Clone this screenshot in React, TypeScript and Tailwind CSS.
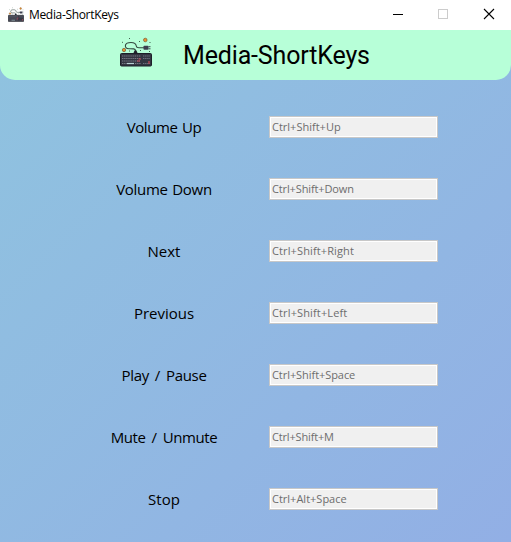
const rows = [
  { label: 'Volume Up', keys: 'Ctrl+Shift+Up', labelSpacing: 'tracking-[-0.4px] [word-spacing:1px]', keySpacing: 'tracking-[0px]' },
  { label: 'Volume Down', keys: 'Ctrl+Shift+Down', labelSpacing: 'tracking-[-0.3px] [word-spacing:1px]', keySpacing: 'tracking-[-0.13px]' },
  { label: 'Next', keys: 'Ctrl+Shift+Right', labelSpacing: 'tracking-[0px]', keySpacing: 'tracking-[0.12px]' },
  { label: 'Previous', keys: 'Ctrl+Shift+Left', labelSpacing: 'tracking-[0px]', keySpacing: 'tracking-[0.13px]' },
  { label: 'Play / Pause', keys: 'Ctrl+Shift+Space', labelSpacing: 'tracking-[-0.3px] [word-spacing:2.3px]', keySpacing: 'tracking-[-0.06px]' },
  { label: 'Mute / Unmute', keys: 'Ctrl+Shift+M', labelSpacing: 'tracking-[-0.4px] [word-spacing:2.5px]', keySpacing: 'tracking-[-0.16px]' },
  { label: 'Stop', keys: 'Ctrl+Alt+Space', labelSpacing: 'tracking-[0px]', keySpacing: 'tracking-[0px]' },
];

function KeyboardIcon({ className }: { className: string }) {
  return (
    <svg viewBox="0 0 32 32" className={className} fill="none">
      <path d="M15.5 16V13.5C15.500 11.500 12 11.700 9 11.700C6 11.700 5 10 5.500 8C6 6 8 5.500 11 5.500C15 5.500 16 7 16.300 9C16.500 10.500 17.500 10.700 19 10.700H24" stroke="#33483f" strokeWidth="1.100" />
      <path d="M13.500 16L14.500 13.500H16.500L17.500 16Z" fill="#20242c" />
      <rect x="23.500" y="8.800" width="5" height="4" rx=".8" fill="#3d3f50" />
      <path d="M28.500 9.700H30.500M28.500 11.800H30.500" stroke="#3d4850" />
      <circle cx="25.300" cy="3" r="1.800" fill="#e9912f" stroke="#6a4a2a" strokeWidth=".6" />
      <circle cx="4" cy="13" r="1.700" fill="#e9912f" stroke="#6a4a2a" strokeWidth=".6" />
      <path d="M9 1.500h1M2 5.300h1M19 4.500h1M29.500 5.500h1M29 14.500h1M9 14h1M20 13.500h1" stroke="#40634f" />
      <rect x=".5" y="16.500" width="31" height="12.500" rx="1" fill="#343642" stroke="#1d2029" />
      <path d="M2 19H21M2 21.500H21M2 24H20M2 26.500H7M15 26.500H21" stroke="#777a85" strokeWidth="1.200" strokeDasharray="1.4 .7" />
      <path d="M23 19H30M23 21.500H30M23 26.500H30" stroke="#6d7280" strokeWidth="1.200" strokeDasharray="1.4 .7" />
      <path d="M7 26.500H14" stroke="#b7d0d2" strokeWidth="1.200" />
      <path d="M18.500 22H21M17 24H20M29 24V27" stroke="#c94958" strokeWidth="1.200" />
    </svg>
  );
}

export default function App() {
  return (
    <div className="flex h-[542px] w-[511px] flex-col overflow-hidden bg-white text-black">
      <div className="flex h-[30px] shrink-0 items-center pl-2">
        <KeyboardIcon className="size-4" />
        <span className="ml-[5px] font-['Open_Sans',sans-serif] text-[12px] leading-4 tracking-[-0.33px]">Media-ShortKeys</span>
        <svg className="ml-auto h-[30px] w-[138px]" viewBox="0 0 138 30" fill="none">
          <path d="M20 14.500h10" stroke="#000" />
          <rect x="65.500" y="9.500" width="9" height="9" stroke="#ccc" />
          <path d="M111 9l10 10M121 9l-10 10" stroke="#000" strokeWidth="1.100" />
        </svg>
      </div>
      <div className="flex flex-1 flex-col bg-linear-to-br from-[#8fc3df] to-[#92afe5]">
        <header className="flex h-[50px] items-center rounded-b-[15px] bg-[#b7ffd8] pl-[120px]">
          <KeyboardIcon className="-mt-1 size-8" />
          <h1 className="mt-px ml-[31px] font-[Roboto,sans-serif] text-[25px] leading-8 tracking-[-0.15px] whitespace-nowrap">Media-ShortKeys</h1>
        </header>
        <main className="flex flex-col gap-10 pt-9">
          {rows.map((row) => (
            <div key={row.label} className="flex h-[22px] items-center">
              <div className="ml-[84px] flex w-[160px] justify-center">
                <span className={`font-['Open_Sans',sans-serif] text-[15px] leading-5 whitespace-nowrap ${row.labelSpacing}`}>{row.label}</span>
              </div>
              <div className="ml-[25px] flex h-[22px] w-[169px] items-center border border-[#c8c8c8] bg-white p-px">
                <span className={`flex h-full w-full items-center bg-[#f0f0f0] pl-px font-['Open_Sans',sans-serif] text-[11px] leading-4 text-[#6d6d6d] ${row.keySpacing}`}>{row.keys}</span>
              </div>
            </div>
          ))}
        </main>
      </div>
    </div>
  );
}
